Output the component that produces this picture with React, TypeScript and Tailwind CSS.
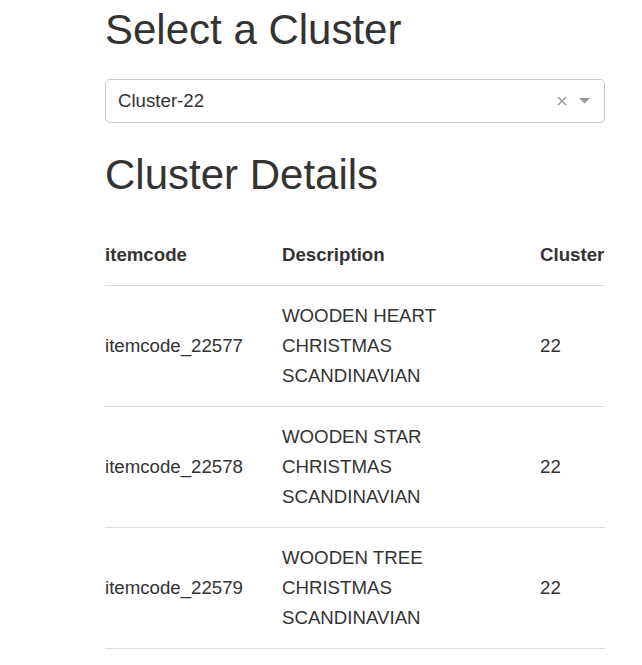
import React from "react";

const rows = [
  { code: "itemcode_22577", desc: ["WOODEN HEART", "CHRISTMAS", "SCANDINAVIAN"], cluster: "22" },
  { code: "itemcode_22578", desc: ["WOODEN STAR", "CHRISTMAS", "SCANDINAVIAN"], cluster: "22" },
  { code: "itemcode_22579", desc: ["WOODEN TREE", "CHRISTMAS", "SCANDINAVIAN"], cluster: "22" },
];

export default function App() {
  return (
    <div className="min-h-screen bg-white text-[#333] font-['Liberation_Sans',Arial,sans-serif]">
      <div className="w-[500px] ml-[105px] pt-[7px]">
        {/* Cluster picker */}
        <h1 className="text-[42px] leading-[1.1] font-normal">Select a Cluster</h1>
        <div className="mt-[26px] h-[44px] border border-[#ccc] rounded-[5px] flex items-center pl-[12px] pr-[14px]">
          <span className="flex-1 text-[18.67px]">Cluster-22</span>
          <svg width="10" height="10" viewBox="0 0 10 10" className="mr-[12px]">
            <path d="M1 1 L9 9 M9 1 L1 9" stroke="#999" strokeWidth="1.5" />
          </svg>
          <svg width="11" height="6" viewBox="0 0 11 6">
            <path d="M0 0 L11 0 L5.5 5.5 Z" fill="#999" />
          </svg>
        </div>

        {/* Details */}
        <h2 className="mt-[29px] text-[42px] leading-[1.1] font-normal">Cluster Details</h2>
        <table className="mt-[27px] w-[500px] table-fixed border-collapse text-[18.67px] leading-[30px]">
          <colgroup>
            <col className="w-[177px]" />
            <col className="w-[258px]" />
            <col className="w-[65px]" />
          </colgroup>
          <thead>
            <tr className="border-b border-[#ddd]">
              <th className="text-left font-bold py-[15px]">itemcode</th>
              <th className="text-left font-bold py-[15px]">Description</th>
              <th className="text-left font-bold py-[15px]">Cluster</th>
            </tr>
          </thead>
          <tbody>
            {rows.map((r) => (
              <tr key={r.code} className="border-b border-[#ddd]">
                <td className="py-[15px] align-middle">{r.code}</td>
                <td className="py-[15px] align-middle">
                  {r.desc.map((d) => (
                    <div key={d}>{d}</div>
                  ))}
                </td>
                <td className="py-[15px] align-middle">{r.cluster}</td>
              </tr>
            ))}
          </tbody>
        </table>
      </div>
    </div>
  );
}
